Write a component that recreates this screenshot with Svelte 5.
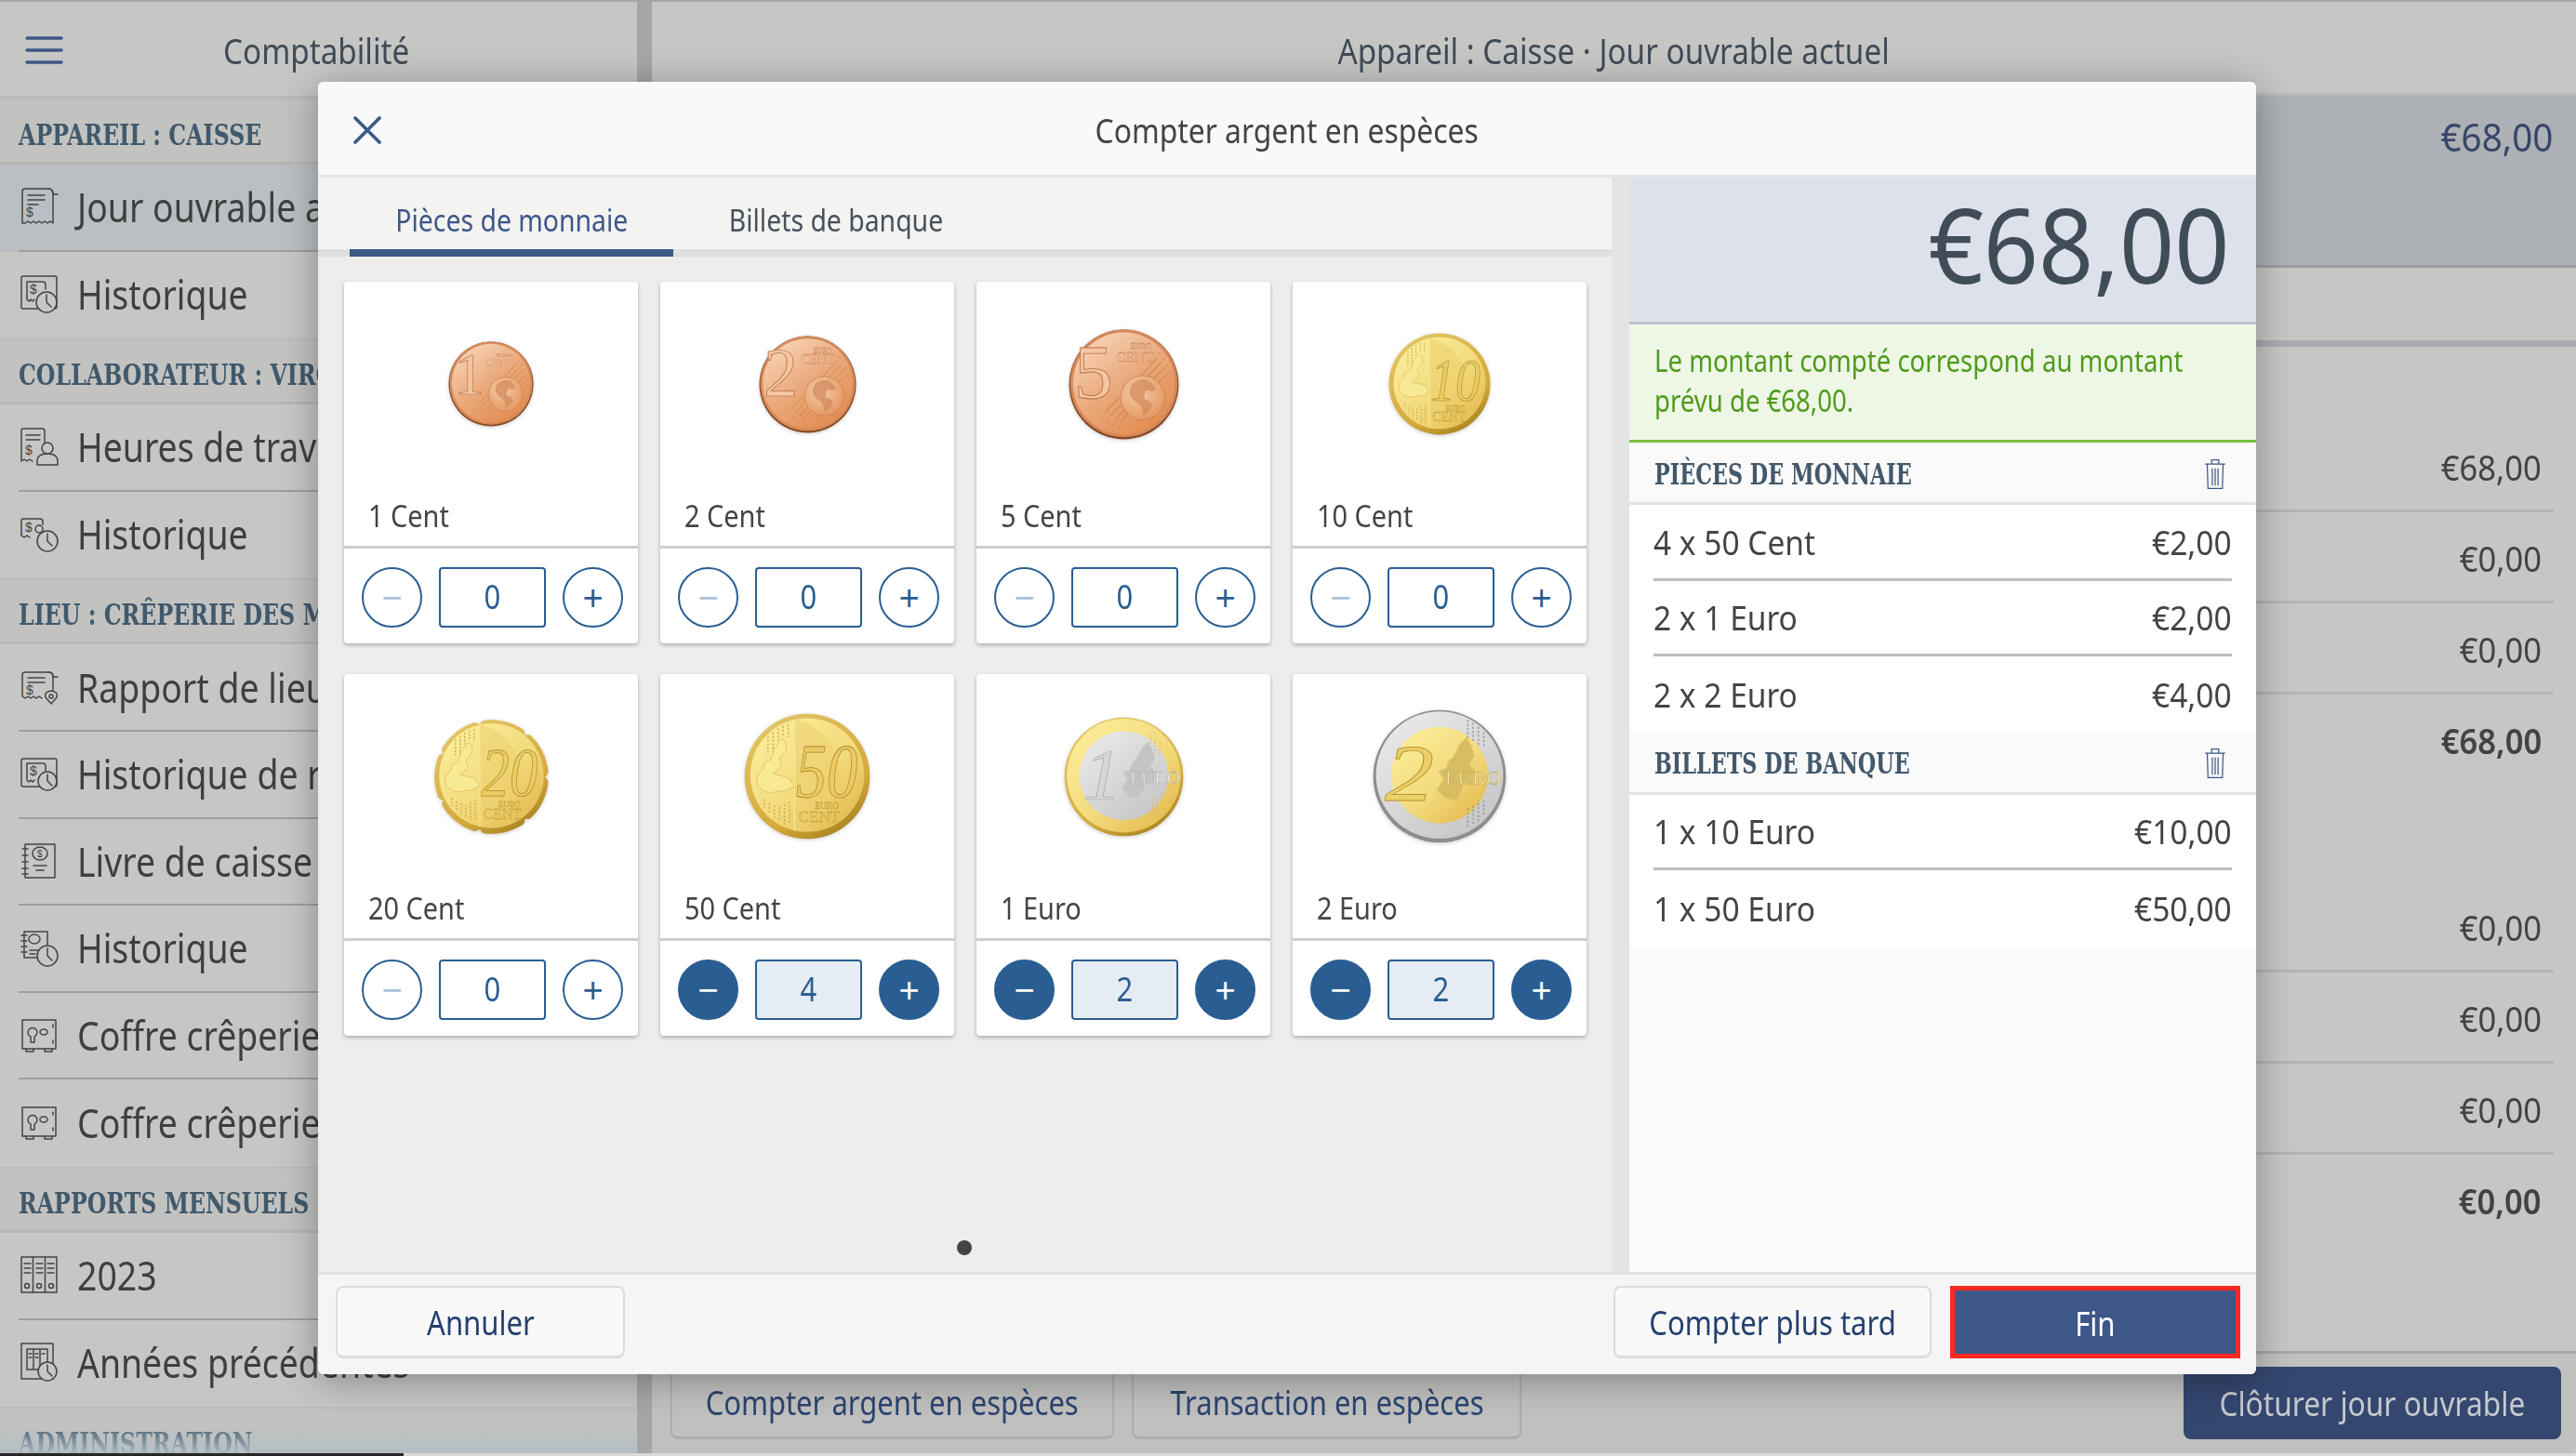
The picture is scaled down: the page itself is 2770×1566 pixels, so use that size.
<script>
  const sidebar = [
    { heading: 'APPAREIL : CAISSE' },
    { label: 'Jour ouvrable actuel', icon: 'receipt', active: true },
    { label: 'Historique', icon: 'receiptClock' },
    { heading: 'COLLABORATEUR : VIRGINIE' },
    { label: 'Heures de travail', icon: 'receiptUser' },
    { label: 'Historique', icon: 'userClock' },
    { heading: 'LIEU : CRÊPERIE DES MOULINS' },
    { label: 'Rapport de lieu', icon: 'reportPin' },
    { label: 'Historique de rapport', icon: 'frameClock' },
    { label: 'Livre de caisse', icon: 'book' },
    { label: 'Historique', icon: 'bookClock' },
    { label: 'Coffre crêperie', icon: 'safe' },
    { label: 'Coffre crêperie', icon: 'safe' },
    { heading: 'RAPPORTS MENSUELS' },
    { label: '2023', icon: 'binders' },
    { label: 'Années précédentes', icon: 'bindersClock' },
    { heading: 'ADMINISTRATION' }
  ];

  const coins = [
    { name: '1 Cent', kind: 'copper', value: '1', size: 92, count: 0 },
    { name: '2 Cent', kind: 'copper', value: '2', size: 105, count: 0 },
    { name: '5 Cent', kind: 'copper', value: '5', size: 119, count: 0 },
    { name: '10 Cent', kind: 'gold', value: '10', size: 110, count: 0 },
    { name: '20 Cent', kind: 'gold', value: '20', size: 125, count: 0, notched: true },
    { name: '50 Cent', kind: 'gold', value: '50', size: 136, count: 4 },
    { name: '1 Euro', kind: 'euro1', value: '1', size: 129, count: 2 },
    { name: '2 Euro', kind: 'euro2', value: '2', size: 144, count: 2 }
  ];

  const summary = [
    { title: 'PIÈCES DE MONNAIE', rows: [['4 x 50 Cent', '€2,00'], ['2 x 1 Euro', '€2,00'], ['2 x 2 Euro', '€4,00']] },
    { title: 'BILLETS DE BANQUE', rows: [['1 x 10 Euro', '€10,00'], ['1 x 50 Euro', '€50,00']] }
  ];

  const upperTotals = [['€68,00'], ['€0,00'], ['€0,00'], ['€68,00', true]];
  const lowerTotals = [['€0,00'], ['€0,00'], ['€0,00'], ['€0,00', true]];

  // the 20 cent piece has seven small notches round its edge
  const notchedEdge = (() => {
    const pts = [];
    for (let a = 0; a < 360; a += 2) {
      const t = (a * Math.PI) / 180;
      const r = 49 - 3 * Math.pow(Math.max(0, Math.cos(7 * t)), 30);
      pts.push(`${(50 + r * Math.cos(t)).toFixed(1)},${(50 + r * Math.sin(t)).toFixed(1)}`);
    }
    return pts.join(' ');
  })();
</script>

{#snippet navIcon(name)}
  <svg class="nav-icon" viewBox="0 0 44 44" fill="none" stroke="currentColor" stroke-width="1.5" stroke-linecap="round" stroke-linejoin="round">
    {#if name === 'receipt'}
      <path d="M4 40V6q0-3 3-3h25q5 0 5 6v31l-3-2-3 2-3-2-3 2-3-2-3 2-3-2-3 2-3-2-3 2z" />
      <path d="M32 3q5 0 5 6h5M10 10h18M10 15h18M10 20h11" />
      <text x="8" y="33" class="sym">$</text>
    {:else if name === 'receiptClock'}
      <rect x="3" y="3" width="38" height="35" rx="2" />
      <path d="M9 28V9h17q3 0 3 3v5M9 28l2 2 2-2 2 2 2-2" />
      <text x="12" y="22" class="sym">$</text>
      <circle cx="30" cy="31" r="11" fill="#c7c7c6" />
      <path d="M30 23v8l5 5" />
    {:else if name === 'frameClock'}
      <rect x="3" y="6" width="38" height="30" rx="2" />
      <path d="M9 29V11h17q3 0 3 3v5M9 29l2 2 2-2 2 2 2-2" />
      <text x="12" y="24" class="sym">$</text>
      <circle cx="31" cy="30" r="10" fill="#c7c7c6" />
      <path d="M31 23v7l5 5" />
    {:else if name === 'receiptUser'}
      <path d="M3 38V5q0-2 2-2h20q3 0 3 3v12M3 38l3-2 3 2 3-2 3 2" />
      <path d="M8 10h15M8 15h15" />
      <text x="7" y="31" class="sym">$</text>
      <circle cx="31" cy="24" r="6" />
      <path d="M20 42v-4q0-8 11-8t11 8v4z" />
    {:else if name === 'userClock'}
      <path d="M3 24V8q0-2 2-2h18q3 0 3 3v3M3 24l3 2 3-2 3 2" />
      <text x="7" y="20" class="sym">$</text>
      <circle cx="22" cy="17" r="4" />
      <circle cx="31" cy="30" r="11" fill="#c7c7c6" />
      <path d="M31 22v8l5 5" />
    {:else if name === 'reportPin'}
      <path d="M4 32V9q0-3 3-3h25q5 0 5 5v14M4 32l3 2 3-2 3 2 3-2 3 2 3-2 3 2" />
      <path d="M32 6q5 0 5 5h5M10 12h18M10 17h18" />
      <text x="8" y="30" class="sym">$</text>
      <path d="M35 40l-6-7q-2-6 6-7 8 1 6 7z" fill="#c7c7c6" />
      <circle cx="35" cy="32" r="2" />
    {:else if name === 'book'}
      <rect x="7" y="4" width="32" height="36" />
      <path d="M4 9h6M4 16h6M4 23h6M4 30h6M4 36h6M16 27h14M19 32h8" />
      <ellipse cx="23" cy="14" rx="8" ry="7" />
      <text x="20" y="18" class="sym sm">$</text>
    {:else if name === 'bookClock'}
      <path d="M6 5h25v14M6 5v28h14" />
      <path d="M3 9h6M3 15h6M3 21h6M3 27h6M12 25h9M12 29h6" />
      <ellipse cx="17" cy="13" rx="6" ry="5" />
      <circle cx="31" cy="31" r="11" fill="#c7c7c6" />
      <path d="M31 23v8l5 5" />
    {:else if name === 'safe'}
      <rect x="4" y="6" width="36" height="31" />
      <path d="M8 37v3h8v-3M28 37v3h8v-3M37 11v3M37 28v3" />
      <path d="M13 30v-6a5 5 0 1 1 4 0v6z" />
      <ellipse cx="27" cy="19" rx="4" ry="3" />
    {:else if name === 'binders'}
      <rect x="3" y="3" width="38" height="38" />
      <path d="M15.5 3v38M28.5 3v38M6 10h7M6 15h7M6 20h7M19 10h7M19 15h7M19 20h7M31 10h7M31 15h7M31 20h7" />
      <circle cx="9" cy="34" r="2.5" /><circle cx="22" cy="34" r="2.5" /><circle cx="35" cy="34" r="2.5" />
    {:else}
      <rect x="3" y="2" width="34" height="38" />
      <path d="M9 8h22v22H9zM16 8v22M23 8v22M11 13h3M18 13h3M25 13h3M11 17h3M18 17h3" />
      <circle cx="31" cy="32" r="10" fill="#c7c7c6" />
      <path d="M31 25v7l5 5" />
    {/if}
  </svg>
{/snippet}

{#snippet stars(points)}
  {#each points as [x, y]}
    <circle cx={x} cy={y} r="0.8" fill="currentColor" />
  {/each}
{/snippet}

{#snippet coinArt(coin, i)}
  <svg class="coin" width={coin.size} height={coin.size} viewBox="0 0 100 100">
    <defs>
      <linearGradient id="copper{i}" x1="0.15" y1="0.05" x2="0.8" y2="0.95">
        <stop offset="0" stop-color="#f7d4b6" /><stop offset="0.5" stop-color="#eaa97c" /><stop offset="1" stop-color="#e28c50" />
      </linearGradient>
      <radialGradient id="globe{i}" cx="0.4" cy="0.35" r="0.8">
        <stop offset="0" stop-color="#f6cdaa" /><stop offset="1" stop-color="#e18e55" />
      </radialGradient>
      <linearGradient id="gold{i}" x1="0.1" y1="0.1" x2="0.9" y2="0.95">
        <stop offset="0" stop-color="#fbed99" /><stop offset="0.55" stop-color="#f3da7c" /><stop offset="1" stop-color="#e3b94d" />
      </linearGradient>
      <linearGradient id="rim{i}" x1="0.2" y1="0" x2="0.8" y2="1">
        <stop offset="0" stop-color="#e4c566" /><stop offset="0.7" stop-color="#d4a93a" /><stop offset="1" stop-color="#a37e1e" />
      </linearGradient>
      <linearGradient id="silver{i}" x1="0.15" y1="0.05" x2="0.85" y2="0.95">
        <stop offset="0" stop-color="#e9e9e9" /><stop offset="1" stop-color="#c6c6c6" />
      </linearGradient>
    </defs>

    {#if coin.kind === 'copper'}
      <circle cx="50" cy="50" r="49.5" fill="#8a4a26" />
      <circle cx="50" cy="49" r="48.5" fill="#d68a5a" />
      <circle cx="50" cy="49" r="46" fill="url(#copper{i})" />
      <path d="M80 26L62 46M84 30L67 47M87 35L72 49M89 41L78 51M47 84L58 72M42 82L54 69M37 79L50 65M33 75L46 62" stroke="#cf8753" stroke-width="0.9" />
      <g color="#cf8753">{@render stars([[82,22],[86,27],[89,33],[91,39],[92,45],[30,80],[35,84],[40,87],[46,89]])}</g>
      <circle cx="67" cy="62" r="20" fill="url(#globe{i})" stroke="#c98251" stroke-width="0.7" />
      <path d="M58 49q7-5 13-3 5 2 8 9-5 2-8 0-4 4-2 9 5 0 7 5-4 8-9 9 0-7-4-11-6-2-8-10 1-6 3-8z" fill="#d18b5c" opacity="0.75" />
      <text x={coin.value === '1' ? 7 : 5} y="62" class="numeral copper-num">{coin.value}</text>
      <text x="56" y="18" class="euro-small copper-ink">EURO</text>
      <text x="43" y="29" class="cent-small copper-ink" textLength="34" lengthAdjust="spacingAndGlyphs">CENT</text>
    {:else if coin.kind === 'gold'}
      {#if coin.notched}
        <polygon points={notchedEdge} fill="url(#rim{i})" />
      {:else}
        <circle cx="50" cy="50" r="49.5" fill="url(#rim{i})" />
      {/if}
      <circle cx="50" cy="49" r="45" fill="url(#gold{i})" />
      <path d="M40 5a45 45 0 0 1 0 88z" fill="#eccd6b" opacity="0.5" />
      <path d="M40 5v88" stroke="#f8eba0" stroke-width="0.7" />
      <path d="M30 20q5 4 3 10l-5 6 2 6-7 6 12 3 5 7-6 3-14 2q-8-2-10-8 0-8 5-10l1-6 5-2 3-9z" fill="#f8e995" stroke="#d8b64e" stroke-width="0.5" />
      <path d="M19 18v14M23 15v16M27 12v10M31 10v8M35 9v10M16 68v7M20 71v8M24 73v10M28 74v12M32 72v16M36 70v18" stroke="#c5a23f" stroke-width="0.9" stroke-dasharray="1.5 1.5" />
      <text x="41" y="66" class="numeral-it gold-num" textLength="49" lengthAdjust="spacingAndGlyphs">{coin.value}</text>
      <text x="56" y="76" class="euro-small gold-ink">EURO</text>
      <text x="43" y="86" class="cent-small gold-ink" textLength="33" lengthAdjust="spacingAndGlyphs">CENT</text>
    {:else if coin.kind === 'euro1'}
      <circle cx="50" cy="50" r="49.5" fill="url(#rim{i})" />
      <circle cx="50" cy="49" r="47.5" fill="url(#gold{i})" />
      <circle cx="50" cy="49" r="37" fill="url(#silver{i})" />
      <path d="M60 36l5-10 5-5q5 7 6 14l-4 6 5 6-3 10-6-3-2 8-4 6-8-2-6-6 5-8-4-6 6-2 2-6z" fill="#c4c4c4" />
      <path d="M74 68v14M78 66v14M82 64v12M72 15v10M76 18v12M80 21v12" stroke="#d9bc5c" stroke-width="0.9" stroke-dasharray="1.5 1.5" />
      <text x="16" y="68" class="numeral-it silver-num" textLength="32" lengthAdjust="spacingAndGlyphs">1</text>
      <text x="55" y="56" class="euro-text silver-euro" textLength="42" lengthAdjust="spacingAndGlyphs">EURO</text>
    {:else}
      <circle cx="50" cy="50" r="49.5" fill="#8d8d8d" />
      <circle cx="50" cy="49" r="47.5" fill="url(#silver{i})" />
      <circle cx="50" cy="49" r="36" fill="url(#gold{i})" />
      <path d="M60 36l5-10 5-5q5 7 6 14l-4 6 5 6-3 10-6-3-2 8-4 6-8-2-6-6 5-8-4-6 6-2 2-6z" fill="#d9bd62" />
      <path d="M71 8v14M75 10v14M79 13v14M83 17v12M71 74v14M75 72v14M79 70v14M83 68v12" stroke="#8f8f8f" stroke-width="0.9" stroke-dasharray="1.5 1.5" />
      <text x="9" y="68" class="numeral-it two-num" textLength="37" lengthAdjust="spacingAndGlyphs">2</text>
      <text x="54" y="56" class="euro-text gold-euro" textLength="42" lengthAdjust="spacingAndGlyphs">EURO</text>
    {/if}
  </svg>
{/snippet}

{#snippet trash()}
  <svg class="trash" viewBox="0 0 30 44" fill="none" stroke="#3d5788" stroke-width="1.6">
    <path d="M1 8h28M10 8V2h10v6M4 8l1 34h20l1-34M11 14v24M15 14v24M19 14v24" />
  </svg>
{/snippet}

<div class="screen">
  <div class="backdrop">
    <aside class="sidebar">
      <header class="bar side-bar">
        <svg class="burger" viewBox="0 0 40 30" stroke="#3d5788" stroke-width="3.4" stroke-linecap="round">
          <path d="M2 2h37M2 15h37M2 28h37" />
        </svg>
        <span class="bar-title sq l">Comptabilité</span>
      </header>
      <nav>
        {#each sidebar as item}
          {#if item.heading}
            <div class="nav-heading"><span class="sq l">{item.heading}</span></div>
          {:else}
            <div class="nav-item" class:active={item.active}>
              {@render navIcon(item.icon)}
              <span class="nav-label sq l">{item.label}</span>
            </div>
          {/if}
        {/each}
      </nav>
    </aside>

    <main class="content">
      <header class="bar"><span class="bar-title sq">Appareil : Caisse · Jour ouvrable actuel</span></header>
      <div class="selected-row"><span class="sq r">€68,00</span></div>
      <div class="thick-gap"></div>
      <div class="totals upper">
        {#each upperTotals as [amount, bold]}
          <div class="total-row" class:bold={bold}><span class="sq r">{amount}</span></div>
        {/each}
      </div>
      <div class="totals lower">
        {#each lowerTotals as [amount, bold]}
          <div class="total-row" class:bold={bold}><span class="sq r">{amount}</span></div>
        {/each}
      </div>
      <footer class="actions">
        <button class="ghost wide"><span class="sq">Compter argent en espèces</span></button>
        <button class="ghost"><span class="sq">Transaction en espèces</span></button>
        <button class="solid"><span class="sq">Clôturer jour ouvrable</span></button>
      </footer>
    </main>
  </div>
  <div class="strip"></div>

  <section class="modal">
    <header class="modal-head">
      <button class="close" aria-label="Fermer">
        <svg viewBox="0 0 30 30" width="30" height="30" stroke="#3d5788" stroke-width="3.6" stroke-linecap="round"><path d="M2 2l26 26M28 2L2 28" /></svg>
      </button>
      <h1><span class="sq">Compter argent en espèces</span></h1>
    </header>

    <div class="modal-body">
      <div class="counting">
        <div class="tabs">
          <span class="tab on"><span class="sq">Pièces de monnaie</span></span>
          <span class="tab"><span class="sq">Billets de banque</span></span>
        </div>
        <div class="grid">
          {#each coins as coin, i}
            <article class="card">
              <div class="coin-box">{@render coinArt(coin, i)}</div>
              <div class="coin-name"><span class="sq l">{coin.name}</span></div>
              <div class="stepper" class:filled={coin.count > 0}>
                <button class="round minus">−</button>
                <div class="qty"><span class="sq">{coin.count}</span></div>
                <button class="round">+</button>
              </div>
            </article>
          {/each}
        </div>
        <div class="dots"><i></i></div>
      </div>

      <div class="summary">
        <div class="sum-total"><span class="sq r">€68,00</span></div>
        <div class="notice"><span class="sq l">Le montant compté correspond au montant<br />prévu de €68,00.</span></div>
        {#each summary as group}
          <div class="sum-head"><span class="sq l">{group.title}</span>{@render trash()}</div>
          {#each group.rows as [what, amount]}
            <div class="sum-row">
              <div class="sum-line"><span class="sq l">{what}</span><span class="sq r">{amount}</span></div>
            </div>
          {/each}
        {/each}
      </div>
    </div>

    <footer class="modal-foot">
      <button class="btn cancel"><span class="sq">Annuler</span></button>
      <button class="btn later"><span class="sq">Compter plus tard</span></button>
      <button class="btn done"><span class="sq">Fin</span></button>
    </footer>
  </section>
</div>

<style>
  :global(body) {
    margin: 0;
    background: #c6c6c5;
  }

  .screen {
    position: relative;
    width: 2770px;
    height: 1566px;
    overflow: hidden;
    font-family: "Noto Sans", "Open Sans", sans-serif;
    color: #3f3f3f;
    border-top: 2px solid #a9a4aa;
    box-sizing: border-box;
  }

  /* the product font is condensed, none of the installed ones is */
  .sq {
    display: inline-block;
    white-space: nowrap;
    transform: scaleX(var(--sq, 0.86));
  }

  .sq.l {
    transform-origin: left center;
  }

  .sq.r {
    transform-origin: right center;
  }

  button {
    font: inherit;
    padding: 0;
    cursor: pointer;
  }

  .backdrop {
    display: flex;
    height: 100%;
    background: #c6c6c5;
  }

  .sidebar {
    width: 685px;
    flex: none;
    border-right: 16px solid #a6a6a5;
    overflow: hidden;
    position: relative;
  }

  .sidebar::after {
    content: "";
    position: absolute;
    left: 0;
    right: 0;
    bottom: 0;
    height: 36px;
    background: linear-gradient(transparent, #b3bfc4);
  }

  .bar {
    height: 101px;
    padding-top: 5px;
    display: flex;
    align-items: center;
    justify-content: center;
    position: relative;
    border-bottom: 3px solid #b9b9b8;
    box-sizing: border-box;
    flex: none;
  }

  .bar-title {
    font-size: 38px;
    color: #414b55;
    --sq: 0.875;
  }

  .side-bar {
    height: 104px;
    padding-top: 2px;
    justify-content: flex-start;
  }

  .side-bar .bar-title {
    margin-left: 240px;
  }

  .burger {
    position: absolute;
    left: 26px;
    top: 37px;
    width: 42px;
    height: 30px;
  }

  .nav-heading {
    height: 71px;
    box-sizing: border-box;
    padding: 8px 0 0 20px;
    display: flex;
    align-items: center;
    font-family: "DejaVu Serif", "Liberation Serif", serif;
    font-stretch: 75%;
    font-weight: 700;
    font-size: 31px;
    --sq: 0.85;
    color: #41596b;
    white-space: nowrap;
    background: #c2c2c1;
    border-top: 2px solid #bcbcbb;
    border-bottom: 3px solid #b7b7b6;
  }

  .nav-item {
    height: 93.6px;
    box-sizing: border-box;
    display: flex;
    align-items: center;
    padding: 0 0 3px 20px;
    color: #3f3f3f;
    white-space: nowrap;
    background: linear-gradient(#9f9f9e, #9f9f9e) 20px 100% / 100% 2px no-repeat;
  }

  .nav-item:has(+ .nav-heading) {
    background-image: none;
  }

  .nav-item.active {
    background-color: #b9bfc2;
  }

  .nav-icon {
    width: 44px;
    height: 44px;
    flex: none;
    color: #444;
  }

  .nav-label {
    margin-left: 19px;
    font-size: 44px;
    --sq: 0.85;
  }

  .sym {
    font-size: 14px;
    font-family: "Liberation Sans", sans-serif;
    fill: #444;
    stroke: none;
  }

  .sym.sm {
    font-size: 10px;
  }

  .content {
    flex: 1;
    min-width: 0;
    display: flex;
    flex-direction: column;
    position: relative;
  }

  .selected-row {
    height: 185px;
    flex: none;
    box-sizing: border-box;
    background: #adb0b5;
    border-bottom: 3px solid #999ea6;
    text-align: right;
    padding: 18px 25px 0 0;
    font-size: 42px;
    line-height: 52px;
    color: #374668;
    --sq: 0.92;
  }

  .thick-gap {
    height: 85px;
    flex: none;
    box-sizing: border-box;
    border-bottom: 7px solid #a8acb3;
  }

  .totals {
    padding: 0 24px 0 0;
    --sq: 0.91;
  }

  .upper {
    margin-top: 80px;
  }

  .lower {
    margin-top: 103px;
  }

  .total-row {
    height: 98px;
    box-sizing: border-box;
    text-align: right;
    padding: 25px 13px 0 0;
    font-size: 38px;
    line-height: 48px;
    color: #434343;
    border-bottom: 3px solid #b4b4b3;
    margin-left: 800px;
  }

  .total-row.bold {
    font-weight: 600;
    border: 0;
  }

  .actions {
    position: absolute;
    left: 0;
    right: 0;
    top: 1451px;
    height: 111px;
    box-sizing: border-box;
    background: #c0c0bf;
    border-top: 3px solid #a7a7a6;
    border-bottom-right-radius: 14px;
    display: flex;
    align-items: flex-start;
    gap: 19px;
    padding-top: 14px;
    padding-left: 20px;
  }

  .ghost {
    height: 78px;
    width: 419px;
    box-sizing: border-box;
    background: transparent;
    border: 2px solid #adadac;
    border-bottom-width: 3px;
    border-radius: 8px;
    color: #2c4470;
    font-size: 36px;
    white-space: nowrap;
    --sq: 0.86;
  }

  .ghost.wide {
    width: 477px;
  }

  .solid {
    margin-left: auto;
    margin-right: 16px;
    width: 406px;
    height: 78px;
    border: 0;
    border-radius: 8px;
    background: #34476f;
    color: #c5c9cf;
    font-size: 36px;
    white-space: nowrap;
    --sq: 0.88;
  }

  .strip {
    position: absolute;
    left: 0;
    right: 0;
    bottom: 0;
    height: 3px;
    background: linear-gradient(90deg, #262626 0 434px, #d9d9d8 434px);
  }

  .modal {
    position: absolute;
    left: 342px;
    top: 86px;
    width: 2084px;
    height: 1390px;
    display: flex;
    flex-direction: column;
    background: #f6f6f6;
    border-radius: 6px;
    box-shadow: 0 6px 40px rgba(0, 0, 0, 0.32);
    overflow: hidden;
  }

  .modal-head {
    height: 103px;
    flex: none;
    position: relative;
    display: flex;
    align-items: center;
    justify-content: center;
    padding-top: 2px;
    background: #f9f9f9;
    border-bottom: 3px solid #e6e6e6;
    box-sizing: border-box;
  }

  .modal-head h1 {
    margin: 0;
    font-size: 37px;
    font-weight: 400;
    color: #444;
    --sq: 0.86;
  }

  .close {
    position: absolute;
    left: 38px;
    top: 37px;
    border: 0;
    background: none;
    line-height: 0;
  }

  .modal-body {
    flex: 1;
    display: flex;
    min-height: 0;
    background: #e4e4e4;
  }

  .counting {
    width: 1391px;
    flex: none;
    background: #ededec;
    position: relative;
  }

  .tabs {
    height: 85px;
    box-sizing: border-box;
    display: flex;
    background: #f3f3f2;
    border-bottom: 8px solid #dfdfde;
    padding-left: 34px;
  }

  .tab {
    height: 85px;
    box-sizing: border-box;
    width: 348px;
    padding-top: 23px;
    text-align: center;
    font-size: 33px;
    color: #48505a;
    --sq: 0.86;
  }

  .tab.on {
    color: #3d5788;
    border-bottom: 8px solid #3d5788;
  }

  .tab:not(.on) {
    width: 278px;
    margin-left: 36px;
  }

  .grid {
    display: grid;
    grid-template-columns: repeat(4, 316px);
    column-gap: 24px;
    row-gap: 33px;
    padding: 27px 0 0 28px;
  }

  .card {
    height: 389px;
    background: #fff;
    border-radius: 4px;
    box-shadow: 0 2px 4px rgba(0, 0, 0, 0.28);
    display: flex;
    flex-direction: column;
  }

  .coin-box {
    height: 220px;
    display: flex;
    align-items: center;
    justify-content: center;
  }

  .coin {
    filter: drop-shadow(0 1px 2px rgba(0, 0, 0, 0.2));
  }

  .coin text {
    font-family: "Liberation Serif", serif;
  }

  .numeral {
    font-size: 70px;
  }

  .numeral-it {
    font-size: 60px;
    font-style: italic;
  }

  .euro-small {
    font-size: 7px;
  }

  .cent-small {
    font-size: 13px;
  }

  .copper-num {
    fill: #f4c6a3;
    stroke: #b56d3e;
    stroke-width: 0.7;
  }

  .copper-ink {
    fill: #f3c8a8;
    stroke: #bd7545;
    stroke-width: 0.25;
  }

  .gold-num {
    fill: #eccb63;
    stroke: #a98a28;
    stroke-width: 0.6;
  }

  .gold-ink {
    fill: #e6c662;
    stroke: #b9982f;
    stroke-width: 0.25;
  }

  .silver-num {
    fill: #d6d6d6;
    stroke: #a8a8a8;
    stroke-width: 0.5;
  }

  .two-num {
    fill: #ecd06a;
    stroke: #b9962f;
    stroke-width: 0.6;
  }

  .euro-text {
    font-size: 15px;
    stroke-width: 0.3;
  }

  .silver-euro {
    fill: #ececec;
    stroke: #a3a3a3;
  }

  .gold-euro {
    fill: #f4e7a6;
    stroke: #b39c4a;
  }

  .coin-name {
    height: 67px;
    box-sizing: border-box;
    padding: 10px 0 0 26px;
    font-size: 33px;
    line-height: 44px;
    color: #444;
    border-bottom: 3px solid #ccc;
    --sq: 0.875;
  }

  .stepper {
    flex: 1;
    display: flex;
    justify-content: space-between;
    align-items: flex-start;
    padding: 20px 16px 0 19px;
  }

  .round {
    width: 65px;
    height: 65px;
    border-radius: 50%;
    border: 2px solid #2a5e92;
    background: #fff;
    color: #2a5e92;
    font-size: 38px;
    line-height: 56px;
    font-family: "Liberation Sans", sans-serif;
  }

  .round.minus {
    color: #a9c1d9;
  }

  .qty {
    width: 115px;
    height: 65px;
    box-sizing: border-box;
    border: 2px solid #2a5e92;
    border-radius: 4px;
    text-align: center;
    font-size: 36px;
    line-height: 60px;
    color: #2a5e92;
  }

  .filled .round {
    background: #2a5e92;
    color: #fff;
  }

  .filled .qty {
    background: #e5ecf3;
  }

  .dots {
    position: absolute;
    left: 0;
    right: 0;
    bottom: 18px;
    display: flex;
    justify-content: center;
  }

  .dots i {
    width: 16px;
    height: 16px;
    border-radius: 50%;
    background: #444;
    margin-left: -2px;
  }

  .summary {
    flex: 1;
    min-width: 0;
    margin-left: 19px;
    background: #fafafa;
  }

  .sum-total {
    height: 158px;
    box-sizing: border-box;
    background: #dde1e9;
    border-bottom: 3px solid #bac4d4;
    text-align: right;
    padding: 0 29px 0 0;
    font-size: 112px;
    line-height: 142px;
    color: #414c59;
    --sq: 0.924;
  }

  .notice {
    height: 127px;
    box-sizing: border-box;
    padding: 17px 0 0 27px;
    font-size: 32px;
    line-height: 43px;
    color: #4f9a1c;
    background: #eef7e6;
    border-bottom: 3px solid #78c043;
    --sq: 0.861;
  }

  .sum-head {
    height: 67px;
    box-sizing: border-box;
    display: flex;
    align-items: center;
    justify-content: space-between;
    padding: 3px 29px 0 27px;
    background: #fafafa;
    border-bottom: 3px solid #e3e3e3;
    font-family: "DejaVu Serif", "Liberation Serif", serif;
    font-stretch: 75%;
    font-weight: 700;
    font-size: 31px;
    --sq: 0.8;
    color: #43586b;
  }

  .trash {
    width: 30px;
    height: 34px;
  }

  .sum-row {
    height: 81.5px;
    padding: 0 26px;
    box-sizing: border-box;
    background: #fff;
    font-size: 37px;
    color: #444;
    --sq: 0.905;
  }

  .sum-line {
    height: 100%;
    box-sizing: border-box;
    display: flex;
    align-items: center;
    justify-content: space-between;
    border-bottom: 3px solid #bdbdbd;
  }

  .sum-row:last-child .sum-line,
  .sum-row:has(+ .sum-head) .sum-line {
    border-bottom: 0;
  }

  .modal-foot {
    height: 110px;
    flex: none;
    box-sizing: border-box;
    background: #f5f5f5;
    border-top: 3px solid #e2e2e2;
    display: flex;
    align-items: flex-start;
    padding: 12px 17px 0 19px;
  }

  .btn {
    height: 78px;
    box-sizing: border-box;
    font-size: 37px;
    border-radius: 8px;
    background: #f8f8f8;
    border: 2px solid #dcdcdc;
    border-bottom-width: 3px;
    color: #25406f;
    --sq: 0.84;
  }

  .cancel {
    width: 311px;
  }

  .later {
    width: 342px;
    margin-left: auto;
  }

  .done {
    width: 312px;
    margin-left: 20px;
    background: #3d5788;
    color: #fff;
    border: 5px solid #ff2a20;
    border-radius: 0;
  }
</style>
